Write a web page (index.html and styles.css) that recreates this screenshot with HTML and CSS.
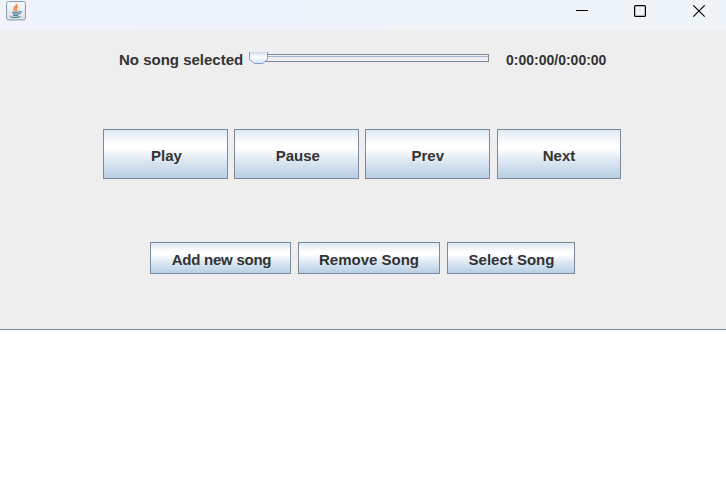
FILE: index.html
```html
<!DOCTYPE html>
<html lang="en">
<head>
<meta charset="utf-8">
<title>Music player</title>
<link rel="stylesheet" href="styles.css">
</head>
<body>
<header class="titlebar">
  <svg class="app-icon" width="20" height="20" viewBox="0 0 20 20" fill="none">
    <defs><linearGradient id="ig" x1="0" y1="0" x2="0" y2="1"><stop offset="0" stop-color="#fafafa"/><stop offset="1" stop-color="#dde1e6"/></linearGradient></defs>
    <rect x=".6" y=".6" width="18.8" height="18.3" rx="1.8" fill="url(#ig)" stroke="#8b98a5"/>
    <path d="M10.6 3c1 2-3 3-2.6 4.800.2 1 1.200 1.500 1.300 2.400M12 5.500c-2 1-2.500 2-1.600 3.100.4.6.1 1.200-.4 1.600" stroke="#ed8b45" stroke-width="1.500"/>
    <path d="M6 10.800c1.500.8 5.500.8 7.500 0M6.500 12.400c2 .7 4.500.7 6.500 0M7 14c1.700.6 3.700.6 5.300 0M13.500 10.500c2-.6 2.500 1.300-.3 2.500M4.500 15c-1.500 1.500 7.500 2 10 .3" stroke="#52809f" stroke-width="1.100"/>
  </svg>
  <svg class="controls" width="132" height="20" viewBox="0 0 132 20" fill="none" stroke="#000">
    <path d="M2 9.500h12" shape-rendering="crispEdges"/>
    <rect x="60.600" y="4.600" width="10.800" height="10.800" rx="1" stroke-width="1.200"/>
    <path d="M119.300 4.300l11.400 11.400M130.700 4.300l-11.400 11.400" stroke-width="1.200"/>
  </svg>
</header>
<main class="panel">
  <div class="status">
    <span class="song">No song selected</span>
    <svg class="slider" width="240" height="14" viewBox="0 0 240 14">
      <defs><linearGradient id="tg" x1="0" y1="0" x2="0" y2="1"><stop offset="0" stop-color="#c9dcef"/><stop offset=".45" stop-color="#fff"/><stop offset="1" stop-color="#d3e3f3"/></linearGradient></defs>
      <g shape-rendering="crispEdges">
        <rect x="10.500" y="2.500" width="229" height="7" fill="#eee" stroke="#7a8a99"/>
        <path d="M11 4.500h228" stroke="#a3b8cc"/>
      </g>
      <path d="M.5 0v7.500l5 4h8l5-4V0z" fill="url(#tg)"/>
      <path d="M.5 0v7.500l5 4h8l5-4V0" fill="none" stroke="#7f9dce"/>
    </svg>
    <span class="time">0:00:00/0:00:00</span>
  </div>
  <div class="playback">
    <button class="btn play">Play</button>
    <button class="btn pause">Pause</button>
    <button class="btn">Prev</button>
    <button class="btn">Next</button>
  </div>
  <div class="library">
    <button class="btn add">Add new song</button>
    <button class="btn remove">Remove Song</button>
    <button class="btn select">Select Song</button>
  </div>
</main>
<section class="songs"></section>
</body>
</html>
```
FILE: styles.css
```css
* { box-sizing: border-box; }
body {
  margin: 0;
  height: 478px;
  display: flex;
  flex-direction: column;
  overflow: hidden;
  background: #fff;
  color: #333;
  font: bold 15px/18px "Liberation Sans", Arial, sans-serif;
}
.titlebar {
  height: 30px;
  padding: 1px 20px 0 6px;
  display: flex;
  justify-content: space-between;
  background: linear-gradient(90deg, #eef3fc 0%, #eef3fb 43%, #eef4f8 60%);
}
.app-icon, .controls { display: block; }
.panel {
  height: 300px;
  padding-top: 21px;
  background: #eee;
  border-bottom: 1px solid #7a8a99;
}
.status {
  height: 20px;
  padding-left: 119px;
  display: flex;
  align-items: flex-start;
}
.song { width: 130px; white-space: nowrap; }
.slider { display: block; margin-top: 1px; }
.time { margin-left: 17px; font-size: 14px; transform: scaleY(1.07); }
.playback {
  display: grid;
  grid-template-columns: 125px 125px 125px 124px;
  column-gap: 6.330px;
  margin: 58px 0 0 103px;
}
.playback .btn { height: 50px; padding-top: 3px; }
.playback .play, .playback .pause { padding-left: 2px; }
.library {
  display: flex;
  gap: 7px;
  margin: 63px 0 0 150px;
}
.library .btn { height: 32px; padding-top: 4px; }
.btn {
  margin: 0;
  padding: 0;
  border: 1px solid #7a8a99;
  border-radius: 0;
  background: linear-gradient(#dde8f3 0%, #fff 30%, #fff 38%, #dde8f3 64%, #b8cfe5 100%);
  color: #333;
  font: inherit;
  white-space: nowrap;
}
.library .add { width: 141px; padding-left: 2px; letter-spacing: -0.25px; }
.remove { width: 142px; }
.library .select { width: 128px; padding-left: 1px; }
.playback .btn:nth-child(3) { margin-left: -0.4px; margin-right: 0.4px; }
```
